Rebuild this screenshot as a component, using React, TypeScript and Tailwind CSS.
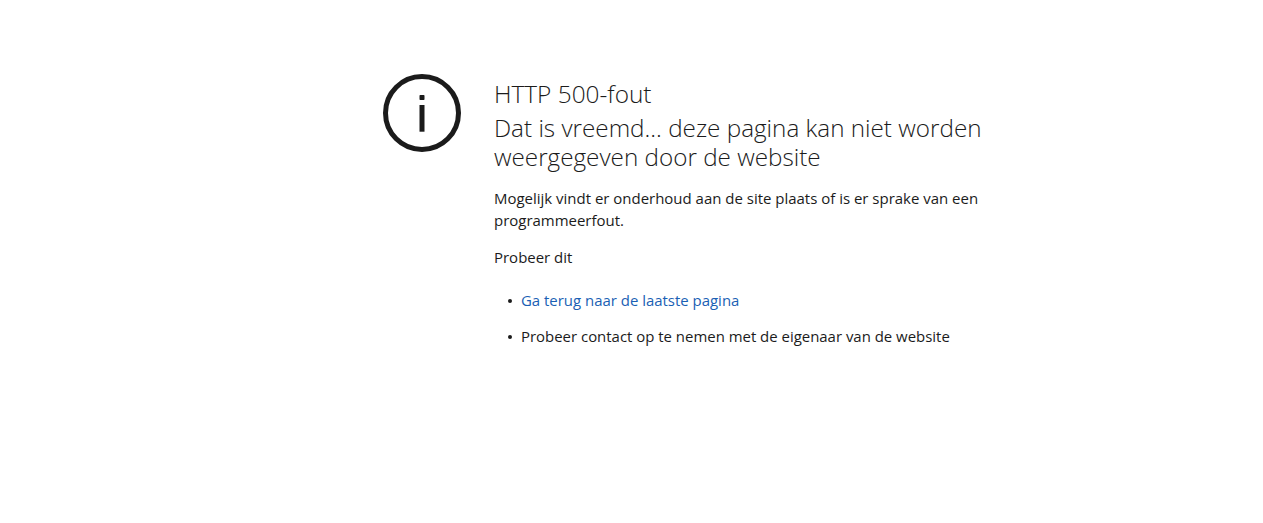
export default function App() {
  return (
    <div className="min-h-[523px] bg-white flex pl-[382px]" style={{ fontFamily: '"Open Sans", sans-serif' }}>
      <div className="pt-[73px] flex gap-[32px] items-start">
        <svg width="80" height="80" viewBox="0 0 80 80" className="shrink-0">
          <circle cx="40" cy="40" r="36.5" fill="none" stroke="#1b1b1b" strokeWidth="5" />
          <rect x="37.5" y="32" width="5" height="26.7" fill="#1b1b1b" />
          <rect x="37.5" y="22" width="5" height="5" rx="0.8" fill="#1b1b1b" />
        </svg>
        <div className="w-[500px] pt-[6px] text-[#1b1b1b]">
          <h1 className="text-[24.4px] leading-[29px] font-[350]">HTTP 500-fout</h1>
          <h2 className="text-[24.25px] leading-[29px] font-[350] mt-[5px]">Dat is vreemd... deze pagina kan niet worden weergegeven door de website</h2>
          <p className="text-[14.97px] leading-[22px] mt-[16px]">Mogelijk vindt er onderhoud aan de site plaats of is er sprake van een programmeerfout.</p>
          <p className="text-[14.97px] leading-[22px] mt-[15px]">Probeer dit</p>
          <ul className="mt-[21px] flex flex-col gap-[14px] text-[14.95px] leading-[22px] pl-[14px]">
            <li className="flex items-center gap-[9px]">
              <span className="w-[4px] h-[4px] rounded-full bg-[#1b1b1b] mt-[1px]" />
              <a className="text-[#1a5fb4]">Ga terug naar de laatste pagina</a>
            </li>
            <li className="flex items-center gap-[9px]">
              <span className="w-[4px] h-[4px] rounded-full bg-[#1b1b1b] mt-[1px]" />
              <span>Probeer contact op te nemen met de eigenaar van de website</span>
            </li>
          </ul>
        </div>
      </div>
    </div>
  );
}
